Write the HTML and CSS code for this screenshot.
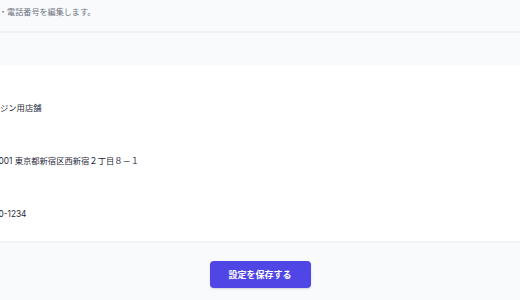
FILE: index.html
```html
<!DOCTYPE html>
<html lang="ja">
<head>
    <meta charset="UTF-8">
    <meta name="viewport" content="width=device-width, initial-scale=1.0">
    <title>店舗設定</title>
    <link rel="stylesheet" href="styles.css">
</head>
<body>
    <div class="panel">
        <div class="panel-head">
            <p class="lead">・電話番号を編集します。</p>
        </div>
        <div class="panel-gap"></div>

        <div class="fields">
            <div class="field"><span class="value">ジン用店舗</span></div>
            <div class="field"><span class="value cut">001 東京都新宿区西新宿２丁目８－１</span></div>
            <div class="field"><span class="value cut">0-1234</span></div>
        </div>

        <div class="panel-foot">
            <button class="save-button" type="button">設定を保存する</button>
        </div>
    </div>
</body>
</html>
```

FILE: styles.css
```css
body, html {
    margin: 0;
    height: 100%;
    overflow: hidden;
    font-family: Inter, "Noto Sans CJK JP", sans-serif;
    background-color: #f9fafb;
}
.panel {
    width: 520px;
}
.panel-head {
    height: 31px;
    background-color: #f9fafb;
    border-bottom: 2px solid #f1f2f4;
}
.lead {
    margin: 0;
    padding-top: 6px;
    margin-left: -1px;
    font-size: 8.1px;
    line-height: 12px;
    color: #6b7280;
    white-space: nowrap;
}
.panel-gap {
    height: 32px;
    background-color: #f9fafb;
}
.fields {
    background-color: #ffffff;
    padding: 16px 0 1px 0;
}
.field {
    height: 53px;
    display: flex;
    align-items: center;
}
.value {
    font-size: 8.3px;
    line-height: 12px;
    color: #1f2937;
    white-space: nowrap;
}
.value.cut {
    margin-left: -1.5px;
}
.panel-foot {
    border-top: 2px solid #f1f2f4;
    background-color: #f9fafb;
    display: flex;
    justify-content: center;
    padding-top: 18px;
}
.save-button {
    width: 101px;
    height: 27px;
    border: none;
    border-radius: 4px;
    background-color: #4f46e5;
    color: #ffffff;
    font-family: inherit;
    font-size: 9px;
    font-weight: 700;
    box-shadow: 0 1px 2px rgba(0,0,0,0.15);
    cursor: pointer;
}
```
